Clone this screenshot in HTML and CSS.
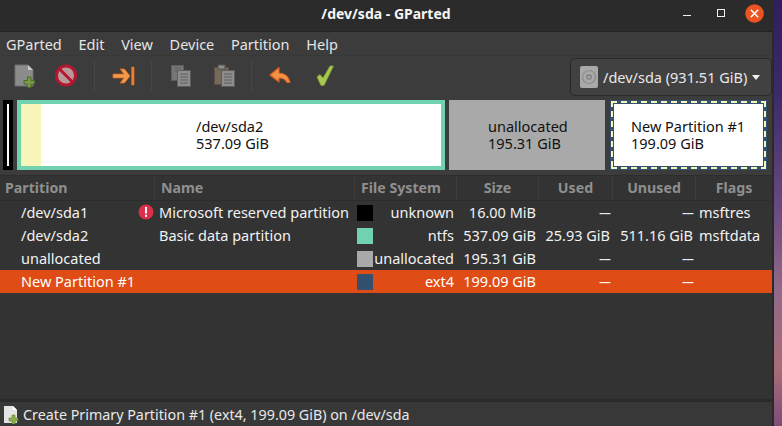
FILE: index.html
```html
<!DOCTYPE html>
<html>
<head>
<meta charset="utf-8">
<title>/dev/sda - GParted</title>
<link rel="stylesheet" href="styles.css">
</head>
<body>
<div class="window">
  <header class="titlebar">
    <div class="title">/dev/sda - GParted</div>
    <div class="wincontrols">
      <i class="wmin"></i>
      <i class="wmax"></i>
      <svg class="close" width="19" height="19" viewBox="0 0 19 19"><circle cx="9.500" cy="9.500" r="9.300" fill="#e95420"/><path d="M5.800 5.800l7.400 7.400M13.200 5.800l-7.400 7.400" stroke="#fff" stroke-width="1.500"/></svg>
    </div>
  </header>
  <nav class="menubar">
    <span>GParted</span><span>Edit</span><span>View</span><span>Device</span><span>Partition</span><span>Help</span>
  </nav>
  <div class="toolbar">
    <div class="tools">
      <svg class="tool" width="24" height="24" viewBox="0 0 24 24"><path d="M2 1h13l5 5v16H2z" fill="#8b8b8b" stroke="#6e6e6e"/><path d="M15 1l5 5h-5z" fill="#c9c9c9"/><path d="M14.500 13h3.500v3.500h3.500V20H18v3.500h-3.500V20H11v-3.500h3.500z" fill="#7a9a4a" stroke="#4f6b2a"/></svg>
      <svg class="tool stop" width="24" height="24" viewBox="0 0 24 24"><circle cx="12" cy="11.500" r="9.500" fill="#b89a9a" stroke="#b3182f" stroke-width="3"/><path d="M5.500 5l13 13" stroke="#b3182f" stroke-width="3"/></svg>
      <i class="sep sep1"></i>
      <svg class="tool arrow" width="24" height="24" viewBox="0 0 24 24"><path d="M1 10h11l-4-5h4.500l5.500 7-5.500 7H8l4-5H1z" fill="#f3994a" stroke="#d9631f" stroke-width=".8" stroke-linejoin="round"/><rect x="19.500" y="3" width="2.600" height="18" fill="#f08030" stroke="#d9631f" stroke-width=".5"/></svg>
      <i class="sep sep2"></i>
      <svg class="tool copy" width="24" height="24" viewBox="0 0 24 24"><rect x="2.500" y="1.500" width="12" height="15" fill="#777" stroke="#5d5d5d"/><rect x="8.500" y="6.500" width="13" height="16" fill="#8d8d8d" stroke="#5d5d5d"/><path d="M11 10h8M11 13h8M11 16h8M11 19h8" stroke="#5e5e5e"/><path d="M5 4h7M5 7h3" stroke="#5e5e5e"/></svg>
      <svg class="tool paste" width="24" height="24" viewBox="0 0 24 24"><rect x="2.500" y="3.500" width="14" height="17" fill="#76695a" stroke="#5c5044"/><rect x="6" y="1" width="7" height="4" fill="#8d8d8d" stroke="#555"/><rect x="9.500" y="6.500" width="13" height="16" fill="#8d8d8d" stroke="#5d5d5d"/><path d="M12 10h8M12 13h8M12 16h8M12 19h8" stroke="#5e5e5e"/></svg>
      <i class="sep sep3"></i>
      <svg class="tool undo" width="24" height="24" viewBox="0 0 24 24"><path d="M11 3.500L2 11l9 7v-4c4 0 6 1 8 4.500h3c-1-5.500-5-9.500-11-9.500z" fill="#f39345" stroke="#dd5c1e" stroke-width="1.200" stroke-linejoin="round"/></svg>
      <svg class="tool apply" width="24" height="24" viewBox="0 0 24 24"><path d="M5 13l3-2.500 3 3.500L18 2h3.500L12 21.500H9z" fill="#a8c94f" stroke="#7f9c36" stroke-width=".8"/></svg>
    </div>
    <div class="device">
      <svg width="18" height="22" viewBox="0 0 18 22"><rect width="18" height="22" rx="2" fill="#a9a9a9"/><circle cx="9" cy="11" r="6.500" fill="none" stroke="#8b8b8b" stroke-width="1.200"/><circle cx="9" cy="11" r="2.200" fill="none" stroke="#7a7a7a" stroke-width="1.200"/></svg>
      <span class="devname">/dev/sda (931.51 GiB)</span>
      <i class="caret"></i>
    </div>
  </div>
  <section class="map">
    <div class="seg seg-a"><i></i></div>
    <div class="seg seg-b"><div class="used"></div><div class="label lb"><span>/dev/sda2</span><span>537.09 GiB</span></div></div>
    <div class="seg seg-c"><div class="label"><span>unallocated</span><span>195.31 GiB</span></div></div>
    <div class="seg seg-d"><div class="label"><span>New Partition #1</span><span>199.09 GiB</span></div></div>
  </section>
  <section class="table">
    <div class="row head">
      <div class="h p">Partition</div><div class="h n">Name</div><div class="h f">File System</div><div class="h c">Size</div><div class="h c">Used</div><div class="h c">Unused</div><div class="h c">Flags</div>
    </div>
    <div class="row">
      <div class="d part">/dev/sda1<svg class="warn" width="16" height="16" viewBox="0 0 16 16"><circle cx="8" cy="8" r="7.500" fill="#dc2f4b"/><rect x="7" y="3" width="2" height="6.500" fill="#fff"/><rect x="7" y="10.800" width="2" height="2" fill="#fff"/></svg></div>
      <div class="d name">Microsoft reserved partition</div>
      <div class="d fs"><i class="sw k0"></i><span>unknown</span></div>
      <div class="d num">16.00 MiB</div><div class="d num nil">---</div><div class="d num nil">---</div><div class="d flags">msftres</div>
    </div>
    <div class="row">
      <div class="d part">/dev/sda2</div>
      <div class="d name">Basic data partition</div>
      <div class="d fs"><i class="sw k1"></i><span>ntfs</span></div>
      <div class="d num">537.09 GiB</div><div class="d num">25.93 GiB</div><div class="d num">511.16 GiB</div><div class="d flags">msftdata</div>
    </div>
    <div class="row">
      <div class="d part">unallocated</div>
      <div class="d name"></div>
      <div class="d fs"><i class="sw k2"></i><span>unallocated</span></div>
      <div class="d num">195.31 GiB</div><div class="d num nil">---</div><div class="d num nil">---</div><div class="d flags"></div>
    </div>
    <div class="row sel">
      <div class="d part">New Partition #1</div>
      <div class="d name"></div>
      <div class="d fs"><i class="sw k3"></i><span>ext4</span></div>
      <div class="d num">199.09 GiB</div><div class="d num nil">---</div><div class="d num nil">---</div><div class="d flags"></div>
    </div>
  </section>
  <footer class="status">
    <svg width="16" height="19" viewBox="0 0 16 19"><path d="M1 1h9l4 4v13H1z" fill="#e4e4e4"/><path d="M10 1l4 4h-4z" fill="#fff"/><path d="M9 10h3v3h3v3h-3v3H9v-3H6v-3h3z" fill="#8cb04e" stroke="#5e7d2e" stroke-width=".6"/></svg>
    <span>Create Primary Partition #1 (ext4, 199.09 GiB) on /dev/sda</span>
  </footer>
</div>
<div class="desktop"></div>
</body>
</html>
```
FILE: styles.css
```css
* { box-sizing: border-box; }
html, body { margin: 0; height: 426px; overflow: hidden; }
body { display: flex; font-family: "Noto Sans", sans-serif; font-size: 14.500px; color: #f2f2f2; background: #3c3c3c; }
i { display: block; font-style: normal; }
.window { width: 774px; height: 426px; display: flex; flex-direction: column; background: #3c3c3c; border-right: 2px solid #2a2a2a; }
.desktop { flex: 1; background: linear-gradient(180deg, #2e1f5e 0, #3b2a68 90px, #6a4a80 210px, #906a88 290px, #a86c78 370px, #7d4d78 426px); }
.titlebar { height: 32px; flex: none; background: #2b2b2b; border-bottom: 1px solid #232323; display: flex; justify-content: center; padding-top: 4px; position: relative; }
.title { font-weight: 700; font-size: 14px; line-height: 20px; color: #f5f5f5; }
.wincontrols { position: absolute; right: 8px; top: 4px; height: 19px; display: flex; align-items: flex-start; }
.wmin { width: 8px; height: 1px; margin-top: 11px; background: #eee; margin-right: 26px; }
.wmax { width: 8px; height: 8px; margin-top: 5px; border: 1px solid #f0f0f0; margin-right: 20px; }
.menubar { height: 24px; flex: none; display: flex; align-items: center; padding-left: 6px; gap: 16.700px; color: #e4e4e4; border-bottom: 1px solid #383838; }
.toolbar { height: 40px; flex: none; display: flex; align-items: center; justify-content: space-between; padding: 0 0 0 13px; }
.tools { display: flex; align-items: center; }
.tool { flex: none; }
.stop { margin-left: 17px; }
.sep { width: 1px; height: 30px; background: #464646; }
.sep1 { margin: 0 17px 0 16px; }
.sep2 { margin: 0 17px 0 15px; }
.copy { margin-right: 19px; }
.sep3 { margin: 0 16px 0 15px; }
.apply { margin-left: 20px; }
.device { width: 202px; height: 38px; margin-top: 2px; border: 1px solid #292929; border-radius: 5px; background: #414141; display: flex; align-items: center; padding-left: 9px; gap: 5px; color: #e8e8e8; }
.caret { width: 0; height: 0; border-left: 4.500px solid transparent; border-right: 4.500px solid transparent; border-top: 5px solid #efefef; }
.map { height: 70px; margin-top: 4px; flex: none; display: flex; padding-left: 3px; }
.seg { height: 70px; color: #111; position: relative; display: flex; }
.seg-a { width: 10px; background: #000; padding: 4px 3px; margin-right: 4px; }
.seg-a i { width: 2px; height: 62px; margin: 0 auto; background: #fff; }
.seg-b { width: 428px; border: 4px solid #70d2ae; background: #fff; margin-right: 4px; }
.used { width: 20px; background: #f8f7b9; flex: none; }
.seg-c { width: 156px; background: #a9a9a9; margin-right: 5px; }
.seg-d { width: 157px; padding: 4px; background-color: #34506f;
  background-image:
    linear-gradient(#fff, #fff),
    repeating-linear-gradient(90deg, #f8f7b9 0 6px, transparent 6px 10px),
    repeating-linear-gradient(90deg, #f8f7b9 0 6px, transparent 6px 10px),
    repeating-linear-gradient(180deg, #f8f7b9 0 6px, transparent 6px 10px),
    repeating-linear-gradient(180deg, #f8f7b9 0 6px, transparent 6px 10px);
  background-repeat: no-repeat;
  background-position: 4px 4px, 1px 1px, 1px 67px, 1px 1px, 154px 1px;
  background-size: 149px 62px, 155px 2px, 155px 2px, 2px 68px, 2px 68px; }
.label { flex: 1; display: flex; flex-direction: column; justify-content: center; align-items: flex-start; line-height: 17px; }
.lb { padding-left: 155px; }
.seg-c .label { padding-left: 39px; }
.seg-d .label { padding-left: 17px; }
.table { flex: 1; margin-top: 5px; background: #333; border-top: 1px solid #2d2d2d; }
.row { display: grid; grid-template-columns: 155px 200px 102px 82px 74px 83px 76px; height: 23px; align-items: center; }
.row.head { height: 25px; border-bottom: 1px solid #2d2d2d; }
.h { height: 24px; line-height: 24px; font-size: 14.200px; font-weight: 700; color: #8f8f8f; border-right: 1px solid #3d3d3d; padding-left: 5px; }
.h.n, .h.f { padding-left: 6px; }
.h.c { text-align: center; padding-left: 0; }
.h:last-child { border-right: 0; }
.d { height: 23px; line-height: 23px; white-space: nowrap; }
.part { padding-left: 21px; position: relative; }
.warn { position: absolute; left: 138px; top: 3px; }
.name { padding-left: 4px; }
.fs { display: flex; justify-content: space-between; padding: 0 3px 0 2px; align-items: center; }
.sw { width: 16px; height: 16px; flex: none; }
.k0 { background: #000; }
.k1 { background: #70d2ae; }
.k2 { background: #a9a9a9; }
.k3 { background: #34506f; }
.num { text-align: right; padding-right: 3px; }
.nil { letter-spacing: -1px; }
.flags { padding-left: 3px; }
.sel { background: #e04c16; color: #fff; }
.status { height: 27px; flex: none; background: #383838; border-top: 3px solid #2a2a2a; display: flex; align-items: center; padding-left: 3px; gap: 4px; font-size: 14.300px; color: #e8e8e8; }
```
